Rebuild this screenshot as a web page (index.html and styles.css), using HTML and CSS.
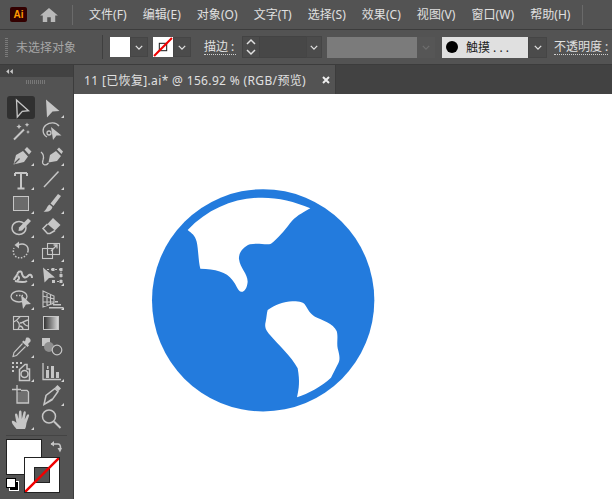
FILE: index.html
```html
<!DOCTYPE html>
<html lang="zh">
<head>
<meta charset="utf-8">
<title>Illustrator</title>
<link rel="stylesheet" href="styles.css">
</head>
<body>
<div class="app">
  <header class="menubar">
    <div class="logo">Ai</div>
    <svg class="home" viewBox="0 0 20 18"><path d="M10 1 L20 9.5 H17 V17 H12 V11.5 H8 V17 H3 V9.5 H0 Z" fill="#b9b9b9"/></svg>
    <div class="vsep"></div>
    <nav class="menus">
      <span>文件(F)</span><span>编辑(E)</span><span>对象(O)</span><span>文字(T)</span><span>选择(S)</span><span>效果(C)</span><span>视图(V)</span><span>窗口(W)</span><span>帮助(H)</span>
    </nav>
    <div class="vsep end"></div>
  </header>

  <section class="controls">
    <div class="grip"></div>
    <span class="nosel">未选择对象</span>
    <div class="vsep2"></div>
    <div class="swatch-combo">
      <div class="sw white"></div>
      <div class="chev"><svg viewBox="0 0 10 6"><path d="M1 1 L5 5 L9 1" /></svg></div>
    </div>
    <div class="swatch-combo second">
      <div class="sw none">
        <svg viewBox="0 0 19 19"><rect x="6" y="6" width="7" height="7" fill="none" stroke="#222" stroke-width="1"/><path d="M1 18 L18 1" stroke="#f00000" stroke-width="2"/></svg>
      </div>
      <div class="chev"><svg viewBox="0 0 10 6"><path d="M1 1 L5 5 L9 1" /></svg></div>
    </div>
    <span class="lbl stroke-lbl">描边 :</span>
    <div class="spin">
      <div class="spin-btn"><svg viewBox="0 0 10 18"><path d="M1 6 L5 2 L9 6 M1 12 L5 16 L9 12"/></svg></div>
      <div class="spin-val"></div>
      <div class="chev small"><svg viewBox="0 0 10 6"><path d="M1 1 L5 5 L9 1" /></svg></div>
    </div>
    <div class="varwidth"></div>
    <div class="chev off"><svg viewBox="0 0 10 6"><path d="M1 1 L5 5 L9 1" /></svg></div>
    <div class="brush">
      <i class="dot"></i><span>触摸 . . .</span>
    </div>
    <div class="chev brushchev"><svg viewBox="0 0 10 6"><path d="M1 1 L5 5 L9 1" /></svg></div>
    <span class="lbl opacity-lbl">不透明度 :</span>
  </section>

  <div class="main">
    <aside class="toolbar">
      <div class="tool-head"><svg class="collapse" viewBox="0 0 8 6"><path d="M3.500 0 V6 L0 3 Z M8 0 V6 L4.500 3 Z"/></svg></div>
      <div class="tool-grip"></div>
      <div class="tools">
        <div class="tool active"><svg viewBox="0 0 30 24"><path class="ol" d="M10.5 5 L22.5 15.7 L16.3 16.3 L11.3 22 Z"/></svg></div>
        <div class="tool more"><svg viewBox="0 0 30 24"><path class="fl" d="M10 4.5 L23.5 16 L16.5 16.5 L11 22.5 Z"/></svg></div>

        <div class="tool"><svg viewBox="0 0 30 24"><path class="ol w2" d="M8 20.5 L18 10.5"/><path class="fl" d="M13 5 l.8 1.8 1.8.8-1.8.8-.8 1.8-.8-1.8-1.8-.8 1.8-.8z M21 3.5 l.7 1.6 1.6.7-1.6.7-.7 1.6-.7-1.6-1.6-.7 1.6-.7z M22 11 l.6 1.4 1.4.6-1.4.6-.6 1.4-.6-1.4-1.4-.6 1.4-.6z"/></svg></div>
        <div class="tool"><svg viewBox="0 0 30 24"><path class="ol" d="M11 18 C6 15 6 9 10 6 C14 3 20 3 23 7"/><circle class="ol" cx="13" cy="14" r="2"/><path class="fl" d="M15 8 L25.5 16.5 L20.5 16.5 L17 21 Z"/></svg></div>

        <div class="tool more"><svg viewBox="0 0 30 24"><path class="fl" d="M7.5 21.5 L10 12 L17 8 L22 13.5 L18 19 Z M18.5 6.5 L21 4 L25.5 8.5 L23 11.5 Z"/><path d="M8.5 20.5 L13.5 15.5" stroke="#535353" stroke-width="1.2"/></svg></div>
        <div class="tool more"><svg viewBox="0 0 30 24"><path class="fl" d="M12.5 19.5 L14 12 L20 8 L25 13 L21 18 Z M21 6.5 L23 4.5 L27 8.5 L25.5 11 Z"/><path class="ol" d="M12.5 20 C9 24 5.5 21 7 17 C8 14 7.5 11 5 9"/></svg></div>

        <div class="tool more"><svg viewBox="0 0 30 24"><path class="ol w2" d="M9 6 V9 M9 6 H21 M21 6 V9 M15 6 V21 M11.5 21.5 H18.5"/></svg></div>
        <div class="tool more"><svg viewBox="0 0 30 24"><path class="ol w15" d="M8 20 L22.5 4.5"/></svg></div>

        <div class="tool more"><svg viewBox="0 0 30 24"><rect x="7.5" y="5.5" width="15" height="14" fill="#6b6b6b" stroke="#c6c6c6"/></svg></div>
        <div class="tool more"><svg viewBox="0 0 30 24"><path class="fl" d="M22 3 L25 5 L17.5 15 L14.5 12.5 Z M13.5 13.5 L16.5 16 C15.5 20 12 21.5 7.5 20.5 C10.5 19.5 10.5 15.5 13.5 13.5 Z"/></svg></div>

        <div class="tool more"><svg viewBox="0 0 30 24"><ellipse class="ol w15" cx="13" cy="13" rx="7" ry="6.5"/><path class="fl" d="M22 3.5 L25 6 L16 15.5 L12.5 16 L13 12.5 Z"/></svg></div>
        <div class="tool more"><svg viewBox="0 0 30 24"><path class="fl" d="M17 3 L24.5 10 L19 15.5 L11.5 9 Z"/><path class="ol w15" d="M11.5 9 L7 13.5 L11.5 18.5 L14 18.5 L19 15.5"/></svg></div>

        <div class="tool more"><svg viewBox="0 0 30 24"><path class="ol w15" d="M12 6 C18 3 23 7 22 12"/><path class="ol w15 dash" d="M22 12 C21 18 14 21 9 17 C7 15 7 11 8 9"/><path class="fl" d="M13 2.5 V9.5 L8.5 6 Z"/></svg></div>
        <div class="tool more"><svg viewBox="0 0 30 24"><rect class="ol w12" x="6.5" y="9.5" width="10" height="10"/><rect class="ol w12" x="11.5" y="4.5" width="12" height="11"/><path class="ol" d="M15 12 L21 6 M17.5 6 H21 V9.5"/></svg></div>

        <div class="tool more"><svg viewBox="0 0 30 24"><path class="ol w2" d="M8 17 C9 13 12 13 12 9 M12 9 C14 8 16 8 16 11 C17 14 19 16 22 13 C23 11 26 11 26 15 M9 18 C13 19 18 20 21 18 M12 13 C14 15 13 17 11 17"/></svg></div>
        <div class="tool more"><svg viewBox="0 0 30 24"><path class="fl" d="M7 4.5 L19 14.5 L13 15 L8.5 19.5 Z"/><path class="ol w12 dash2" d="M11 6.5 H25 V18.5 H15"/><path class="fl" d="M15.5 5 h3 v3 h-3z M23.5 5 h3 v3 h-3z M23.5 11 h3 v3 h-3z M23.5 17 h3 v3 h-3z M16 17 h3 v3 h-3z"/></svg></div>

        <div class="tool more"><svg viewBox="0 0 30 24"><ellipse class="ol" cx="13" cy="9.500" rx="8" ry="5.500"/><path class="ol dash" d="M10 8.500 H17"/><path class="fl" d="M15 8 L25 17 L20 17.500 L17 22 Z"/></svg></div>
        <div class="tool more"><svg viewBox="0 0 30 24"><path class="ol w12" d="M7 4 L18 9 V16 L7 20 Z M7 9 L18 12 M7 15 L18 15 M11 5.500 V19 M14.500 7.500 V17"/><path class="fl" d="M17 17 H25 V18.500 H17Z M13 20 H27 V21.500 H13Z M19 14 H22 V15.500 H19Z"/></svg></div>

        <div class="tool"><svg viewBox="0 0 30 24"><rect class="ol w12" x="7.500" y="5.500" width="15" height="13"/><path class="ol" d="M7.500 11 C11 10 12 8 14 5.500 M11 10 C14 12 14 15 12 18.500 M14 12 C17 12 19 9 22.500 9 M17 11 C18 13 20 15 22.500 15 M14 15 C16 15.500 17 17 17 18.500"/></svg></div>
        <div class="tool"><svg viewBox="0 0 30 24"><defs><linearGradient id="g"><stop offset="0" stop-color="#2e2e2e"/><stop offset="1" stop-color="#dcdcdc"/></linearGradient></defs><rect x="7.500" y="5.500" width="15" height="13" fill="url(#g)" stroke="#c6c6c6"/></svg></div>

        <div class="tool more"><svg viewBox="0 0 30 24"><path class="fl" d="M20 3 C22 1.500 25.500 4 24.500 6.500 L22 9 L23 10.500 L21.500 12 L16 7 L17.500 5.500 L19 6.500 Z"/><path class="ol w12" d="M16.500 8.500 L8 17.500 L7 21.500 L10.500 20.500 L19.500 11.500"/></svg></div>
        <div class="tool"><svg viewBox="0 0 30 24"><rect class="fl" x="6" y="3" width="8" height="8"/><circle cx="13" cy="12" r="5" fill="#8e8e8e"/><circle cx="21" cy="15" r="4.800" fill="#535353" stroke="#c6c6c6" stroke-width="1.200"/></svg></div>

        <div class="tool more"><svg viewBox="0 0 30 24"><path class="fl dots" d="M6 3h2v2H6z M10 3h2v2h-2z M14 3h2v2h-2z M6 7h2v2H6z M10 7h2v2h-2z M6 11h2v2H6z"/><path class="ol w15" d="M13.500 10.500 L19 5.500 H21 V10 H23.500 V21.500 H13.500 Z"/><circle class="ol w15" cx="18.500" cy="15" r="3.500"/></svg></div>
        <div class="tool more"><svg viewBox="0 0 30 24"><path class="ol" d="M7 4 V20.500 H25"/><path class="fl" d="M10 11 H13 V19 H10Z M15 7 H18 V19 H15Z M20 13 H23 V19 H20Z M11 7 H12.500V10H11z"/></svg></div>

        <div class="tool"><svg viewBox="0 0 30 24"><path fill="#6f6f6f" d="M11 9 H22.500 V20 H11 Z"/><path class="ol" d="M11 2 V11 M6 6.500 H15 M15 7.500 H21 L22.500 9 V20 H11 V11"/></svg></div>
        <div class="tool more"><svg viewBox="0 0 30 24"><path class="ol w15" d="M8 21.500 L10 12.500 L19 5.500 L22 8.500 L16 17 Z M8 21.500 L16 16"/><path class="fl" d="M19 4.500 L21.500 2 L25 5.500 L22.500 8 Z"/></svg></div>

        <div class="tool more"><svg viewBox="0 0 30 24"><path class="fl" d="M10.500 22 C8 19 5 15.500 6 14 C7.200 13 9.500 15 10.500 16 L9 8 C9 6 11 6 11.500 8 L12.500 12 L13 5 C13.300 3 15.300 3 15.500 5 L15.800 12 L17.500 5.500 C18 3.500 20 4 19.800 6 L18.700 12.500 L21 8 C22 6.500 23.500 7.500 23 9 L20.500 16 C20 19 20 20 19 22 Z"/></svg></div>
        <div class="tool"><svg viewBox="0 0 30 24"><circle class="ol w15" cx="13" cy="9.500" r="6.500"/><path class="ol w2" d="M18 14.500 L24.500 21"/></svg></div>
      </div>
      <div class="tool-rule"></div>
      <div class="fillstroke">
        <div class="fillbox"></div>
        <div class="strokebox"><div class="hole"></div>
          <svg class="slash" viewBox="0 0 36 36"><path d="M0 36 L36 0" stroke="#f00000" stroke-width="2.600"/></svg>
        </div>
        <svg class="swap" viewBox="0 0 12 12"><path d="M1 3 H8 C10 3 10.500 5 10.500 7" fill="none" stroke="#c6c6c6" stroke-width="1.600"/><path d="M4 0 V5.500 L0.500 3 Z M7.500 7 H12 L10 11.500 Z" fill="#c6c6c6"/></svg>
        <div class="defaults"><i class="d-back"></i><i class="d-front"></i></div>
      </div>
    </aside>

    <div class="doc">
      <div class="tabs">
        <div class="tab"><span>11 [已恢复].ai* @ 156.92 % (RGB/预览)</span>
          <svg class="close" viewBox="0 0 8 8"><path d="M1 1 L7 7 M7 1 L1 7"/></svg>
        </div>
      </div>
      <div class="canvas">
        <svg class="globe" viewBox="0 0 705 696" aria-label="地球">
          <circle cx="354.500" cy="346" r="333.500" fill="#237bdd"/>
          <path fill="#fff" d="M128 135 C190 70 270 38 352 38 C400 38 450 50 496 70 C470 85 450 95 435 115 C420 135 395 165 378 176 C365 182 340 172 315 178 C295 185 280 205 282 222 C285 250 308 265 308 290 C306 310 298 322 288 320 C278 318 275 300 262 285 C245 260 210 252 166 251 C160 230 160 190 155 170 C150 150 140 145 128 135 Z"/>
          <path fill="#fff" d="M368 375 C390 360 420 348 445 349 C465 349 477 352 482 362 C490 375 495 385 510 395 C530 405 565 415 575 438 C580 455 575 470 578 490 C585 515 585 525 580 535 C572 550 565 565 558 578 C530 605 490 625 456 637 C462 610 465 590 458 550 C440 515 400 480 375 450 C362 435 358 425 362 410 C365 395 365 385 368 375 Z"/>
        </svg>
      </div>
    </div>
  </div>
</div>
</body>
</html>
```

FILE: styles.css
```css
* { box-sizing: border-box; }
html, body { margin: 0; padding: 0; background: #535353; }
body { font-family: "Noto Sans", "Noto Sans CJK SC", sans-serif; font-size: 12px; }
.app { width: 612px; height: 499px; display: flex; flex-direction: column; overflow: hidden; background: #535353; }

.menubar { height: 30px; display: flex; align-items: center; padding-left: 10px; color: #e0e0e0; border-bottom: 1px solid #3c3c3c; flex: none; }
.logo { width: 17px; height: 15px; background: #330000; color: #ff9a00; font: bold 10px/15px "Liberation Sans", sans-serif; text-align: center; border-radius: 2px; }
.home { width: 18px; height: 16px; margin-left: 13px; }
.vsep { width: 1px; height: 20px; background: #6a6a6a; margin-left: 14px; }
.vsep.end { margin-left: 12px; }
.menus { display: flex; gap: 16px; margin-left: 16px; white-space: nowrap; line-height: 28px; letter-spacing: 0.050px; }

.controls { height: 35px; display: flex; align-items: center; border-bottom: 1px solid #3c3c3c; flex: none; color: #e0e0e0; padding-left: 5px; }
.grip { width: 3px; height: 19px; background: repeating-linear-gradient(#7a7a7a 0 1px, transparent 1px 2px); }
.nosel { color: #a6a6a6; margin-left: 8px; width: 60px; white-space: nowrap; }
.vsep2 { width: 1px; height: 24px; background: #3f3f3f; margin-left: 26px; }
.swatch-combo { display: flex; align-items: center; margin-left: 7px; height: 20px; }
.swatch-combo.second { margin-left: 5px; }
.sw { width: 20px; height: 20px; }
.sw.white { background: #fff; }
.sw.none { background: #fff; }
.sw svg { display: block; width: 100%; height: 100%; }
.chev { width: 18px; height: 20px; display: flex; align-items: center; justify-content: center; background: #4b4b4b; border: 1px solid #454545; }
.chev svg { width: 8px; height: 5px; fill: none; stroke: #e0e0e0; stroke-width: 1.6; }
.chev.small { width: 16px; height: 22px; }
.chev.off { width: 18px; height: 21px; background: #565656; border: 0; }
.chev.off svg { stroke: #6e6e6e; }
.lbl { white-space: nowrap; border-bottom: 1px dotted #d0d0d0; line-height: 15px; }
.stroke-lbl { margin-left: 13px; width: 32px; }
.spin { display: flex; align-items: center; height: 22px; margin-left: 6px; }
.spin-btn { width: 18px; height: 22px; display: flex; align-items: center; justify-content: center; background: #4b4b4b; border: 1px solid #434343; }
.spin-btn svg { width: 10px; height: 18px; fill: none; stroke: #e0e0e0; stroke-width: 1.500; }
.spin-val { width: 46px; height: 22px; background: #474747; border-top: 1px solid #434343; border-bottom: 1px solid #434343; }
.varwidth { width: 90px; height: 21px; margin-left: 5px; background: #7b7b7b; }
.brush { width: 86px; height: 21px; margin-left: 7px; background: #e0e0e0; color: #222; display: flex; align-items: center; padding-left: 4px; white-space: nowrap; }
.dot { width: 12px; height: 12px; border-radius: 50%; background: #000; margin-right: 8px; flex: none; }
.chev.brushchev { width: 19px; height: 21px; }
.opacity-lbl { margin-left: 7px; }

.main { flex: 1; display: flex; min-height: 0; }
.toolbar { width: 74px; flex: none; display: flex; flex-direction: column; background: #535353; border-right: 1px solid #3c3c3c; position: relative; }
.tool-head { height: 12px; background: #424242; display: flex; align-items: center; padding-left: 6px; flex: none; }
.collapse { width: 7px; height: 5px; fill: #c8c8c8; }
.tool-grip { height: 4px; width: 19px; margin: 3px 0 0 26px; flex: none; background: repeating-linear-gradient(90deg, #777 0 1px, transparent 1px 2px); }
.tools { display: grid; grid-template-columns: 30px 30px; grid-auto-rows: 24px; margin: 11px 0 0 6px; }
.tool { position: relative; height: 24px; width: 30px; }
.tool svg { display: block; width: 30px; height: 24px; }
.tool.active { background: #303030; border-radius: 3px; width: 28px; height: 23px; margin: 1px 0 0 1px; }
.tool.active svg { margin: -1px 0 0 -1px; }
.tool.more::after { content: ""; position: absolute; right: 2px; bottom: 1px; width: 0; height: 0; border-left: 3.500px solid transparent; border-bottom: 3.500px solid #d4d4d4; }
.ol { fill: none; stroke: #c6c6c6; stroke-width: 1.300; }
.w2 { stroke-width: 2; }
.w15 { stroke-width: 1.500; }
.w12 { stroke-width: 1.100; }
.dash { stroke-dasharray: 1.500 1.500; }
.dash2 { stroke-dasharray: 2 2; }
.fl { fill: #c6c6c6; }
.tool-rule { height: 1px; background: #444; margin: 4px 6px 0 6px; flex: none; }
.fillstroke { position: relative; flex: 1; }
.fillbox { position: absolute; left: 6px; top: 3px; width: 36px; height: 36px; background: #fff; border: 1px solid #222; }
.strokebox { position: absolute; left: 24px; top: 21px; width: 36px; height: 36px; background: #fff; border: 1px solid #222; display: flex; align-items: center; justify-content: center; }
.hole { width: 16px; height: 16px; background: #535353; border: 1px solid #222; }
.slash { position: absolute; left: 0; top: 0; width: 34px; height: 34px; }
.swap { position: absolute; left: 50px; top: 5px; width: 12px; height: 12px; }
.defaults { position: absolute; left: 6px; top: 42px; width: 13px; height: 13px; }
.d-back, .d-front { position: absolute; display: block; width: 8px; height: 8px; border: 1px solid #fff; outline: 1px solid #000; }
.d-back { right: 1px; bottom: 1px; background: #000; border-color: #000; outline-color: #fff; }
.d-front { left: 1px; top: 1px; background: #fff; border-color: #fff; outline-color: #000; }

.doc { flex: 1; display: flex; flex-direction: column; min-width: 0; }
.tabs { height: 29px; background: #424242; display: flex; flex: none; }
.tab { width: 262px; background: #535353; color: #e0e0e0; display: flex; align-items: center; padding-left: 10px; white-space: nowrap; letter-spacing: 0.350px; border-right: 1px solid #3c3c3c; position: relative; }
.close { position: absolute; left: 248px; top: 11px; width: 8px; height: 8px; fill: none; stroke: #eee; stroke-width: 2; }
.canvas { flex: 1; background: #fff; padding: 91px 0 0 71px; }
.globe { display: block; width: 235px; height: 232px; }
```
